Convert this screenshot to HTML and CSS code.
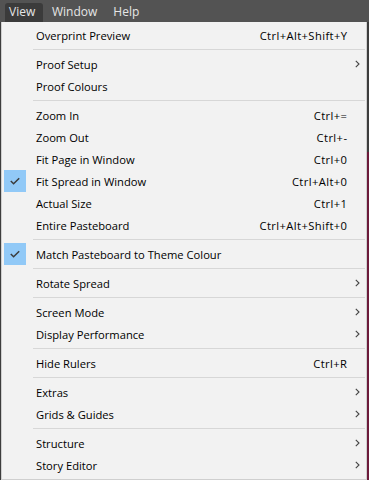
FILE: index.html
```html
<!DOCTYPE html>
<html>
<head>
<meta charset="utf-8">
<link rel="stylesheet" href="styles.css">
</head>
<body>
<div class="app">
  <nav class="menubar">
    <span class="tab active">View</span>
    <span class="tab">Window</span>
    <span class="tab">Help</span>
  </nav>
  <div class="stage">
    <ul class="menu">
      <li class="item"><span class="check"></span><span class="label">Overprint Preview</span><span class="key">Ctrl+Alt+Shift+Y</span><span class="sub"></span></li>
      <li class="sep"></li>
      <li class="item"><span class="check"></span><span class="label">Proof Setup</span><span class="key"></span><span class="sub"><svg viewBox="0 0 5 8" width="5" height="8"><path d="M0.8 0.8 L4 4 L0.8 7.2" fill="none" stroke="#444" stroke-width="1.1"/></svg></span></li>
      <li class="item"><span class="check"></span><span class="label">Proof Colours</span><span class="key"></span><span class="sub"></span></li>
      <li class="sep"></li>
      <li class="item"><span class="check"></span><span class="label">Zoom In</span><span class="key">Ctrl+=</span><span class="sub"></span></li>
      <li class="item"><span class="check"></span><span class="label">Zoom Out</span><span class="key">Ctrl+-</span><span class="sub"></span></li>
      <li class="item"><span class="check"></span><span class="label">Fit Page in Window</span><span class="key">Ctrl+0</span><span class="sub"></span></li>
      <li class="item"><span class="check on"><svg viewBox="0 0 10 8" width="10" height="8"><path d="M0.8 4 L3.6 6.8 L9.2 1.2" fill="none" stroke="#3c3c3c" stroke-width="1.5"/></svg></span><span class="label">Fit Spread in Window</span><span class="key">Ctrl+Alt+0</span><span class="sub"></span></li>
      <li class="item"><span class="check"></span><span class="label">Actual Size</span><span class="key">Ctrl+1</span><span class="sub"></span></li>
      <li class="item"><span class="check"></span><span class="label">Entire Pasteboard</span><span class="key">Ctrl+Alt+Shift+0</span><span class="sub"></span></li>
      <li class="sep"></li>
      <li class="item"><span class="check on"><svg viewBox="0 0 10 8" width="10" height="8"><path d="M0.8 4 L3.6 6.8 L9.2 1.2" fill="none" stroke="#3c3c3c" stroke-width="1.5"/></svg></span><span class="label">Match Pasteboard to Theme Colour</span><span class="key"></span><span class="sub"></span></li>
      <li class="sep"></li>
      <li class="item"><span class="check"></span><span class="label">Rotate Spread</span><span class="key"></span><span class="sub"><svg viewBox="0 0 5 8" width="5" height="8"><path d="M0.8 0.8 L4 4 L0.8 7.2" fill="none" stroke="#444" stroke-width="1.1"/></svg></span></li>
      <li class="sep"></li>
      <li class="item"><span class="check"></span><span class="label">Screen Mode</span><span class="key"></span><span class="sub"><svg viewBox="0 0 5 8" width="5" height="8"><path d="M0.8 0.8 L4 4 L0.8 7.2" fill="none" stroke="#444" stroke-width="1.1"/></svg></span></li>
      <li class="item"><span class="check"></span><span class="label">Display Performance</span><span class="key"></span><span class="sub"><svg viewBox="0 0 5 8" width="5" height="8"><path d="M0.8 0.8 L4 4 L0.8 7.2" fill="none" stroke="#444" stroke-width="1.1"/></svg></span></li>
      <li class="sep"></li>
      <li class="item"><span class="check"></span><span class="label">Hide Rulers</span><span class="key">Ctrl+R</span><span class="sub"></span></li>
      <li class="sep"></li>
      <li class="item"><span class="check"></span><span class="label">Extras</span><span class="key"></span><span class="sub"><svg viewBox="0 0 5 8" width="5" height="8"><path d="M0.8 0.8 L4 4 L0.8 7.2" fill="none" stroke="#444" stroke-width="1.1"/></svg></span></li>
      <li class="item"><span class="check"></span><span class="label">Grids &amp; Guides</span><span class="key"></span><span class="sub"><svg viewBox="0 0 5 8" width="5" height="8"><path d="M0.8 0.8 L4 4 L0.8 7.2" fill="none" stroke="#444" stroke-width="1.1"/></svg></span></li>
      <li class="sep"></li>
      <li class="item"><span class="check"></span><span class="label">Structure</span><span class="key"></span><span class="sub"><svg viewBox="0 0 5 8" width="5" height="8"><path d="M0.8 0.8 L4 4 L0.8 7.2" fill="none" stroke="#444" stroke-width="1.1"/></svg></span></li>
      <li class="item"><span class="check"></span><span class="label">Story Editor</span><span class="key"></span><span class="sub"><svg viewBox="0 0 5 8" width="5" height="8"><path d="M0.8 0.8 L4 4 L0.8 7.2" fill="none" stroke="#444" stroke-width="1.1"/></svg></span></li>
    </ul>
    <div class="canvas-edge"></div>
  </div>
</div>
</body>
</html>
```
FILE: styles.css
```css
* { box-sizing: border-box; }
html, body {
  margin: 0;
  padding: 0;
  width: 369px;
  height: 480px;
  overflow: hidden;
  background: #535353;
  font-family: "Open Sans", "Noto Sans", "Liberation Sans", sans-serif;
  font-size: 11.2px;
}
.app {
  display: flex;
  flex-direction: column;
  height: 480px;
}
.menubar {
  height: 22px;
  display: flex;
  align-items: flex-end;
  padding-left: 5px;
  background: #535353;
}
.tab {
  height: 19px;
  line-height: 18px;
  padding: 0 8px;
  color: #e6e6e6;
  font-size: 12px;
  border-radius: 3px 3px 0 0;
}
.tab.active {
  background: #3b3b3b;
  width: 38px;
  padding-left: 4px;
  margin-right: 1px;
}
.stage {
  flex: 1;
  display: flex;
  padding-left: 1px;
  background: #3d3d3d;
}
.menu {
  list-style: none;
  margin: 0;
  width: 366px;
  height: 458px;
  padding: 2px 0 0 0;
  background: #f2f2f2;
  border: 1px solid #cfcfcf;
  border-top: none;
  color: #000;
}
.item {
  height: 22px;
  display: grid;
  grid-template-columns: 32px 1fr auto 19px;
  align-items: center;
  padding-left: 2px;
}
.check {
  width: 22px;
  height: 22px;
  display: flex;
  align-items: center;
  justify-content: center;
}
.check.on {
  background: #91c9f7;
}
.label {
  white-space: nowrap;
}
.key {
  text-align: right;
  white-space: nowrap;
  letter-spacing: 0.4px;
  margin-right: -0.4px;
}
.sub {
  display: flex;
  justify-content: center;
  align-items: center;
  padding-left: 2px;
}
.sub svg { display: block; }
.sep {
  height: 7px;
  margin-left: 31px;
  margin-right: 1px;
  display: flex;
  align-items: center;
}
.sep::after {
  content: "";
  display: block;
  width: 100%;
  height: 1px;
  background: #d7d7d7;
}
.canvas-edge {
  flex: 1;
  background: linear-gradient(#3d3d3d 0 130px, #6b1a3a 130px 480px);
}
```
